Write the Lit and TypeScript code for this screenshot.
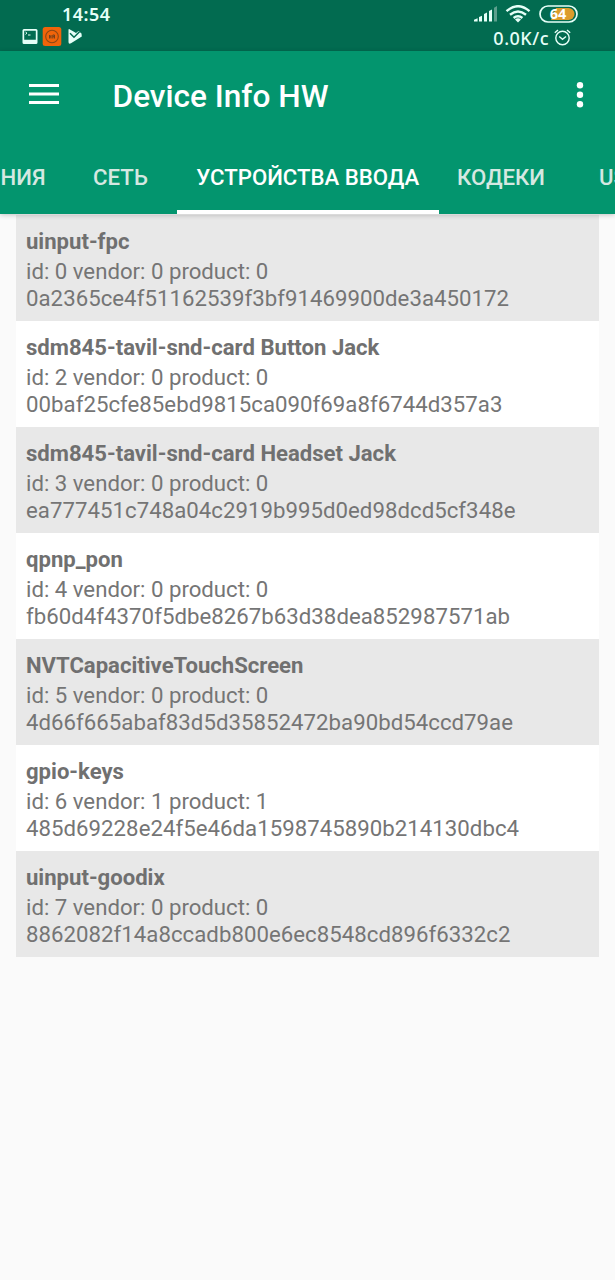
import { LitElement, html, css } from "lit";
import { customElement } from "lit/decorators.js";

interface Device {
  name: string;
  ids: string;
  hash: string;
}

const DEVICES: Device[] = [
  { name: "uinput-fpc", ids: "id: 0 vendor: 0 product: 0", hash: "0a2365ce4f51162539f3bf91469900de3a450172" },
  { name: "sdm845-tavil-snd-card Button Jack", ids: "id: 2 vendor: 0 product: 0", hash: "00baf25cfe85ebd9815ca090f69a8f6744d357a3" },
  { name: "sdm845-tavil-snd-card Headset Jack", ids: "id: 3 vendor: 0 product: 0", hash: "ea777451c748a04c2919b995d0ed98dcd5cf348e" },
  { name: "qpnp_pon", ids: "id: 4 vendor: 0 product: 0", hash: "fb60d4f4370f5dbe8267b63d38dea852987571ab" },
  { name: "NVTCapacitiveTouchScreen", ids: "id: 5 vendor: 0 product: 0", hash: "4d66f665abaf83d5d35852472ba90bd54ccd79ae" },
  { name: "gpio-keys", ids: "id: 6 vendor: 1 product: 1", hash: "485d69228e24f5e46da1598745890b214130dbc4" },
  { name: "uinput-goodix", ids: "id: 7 vendor: 0 product: 0", hash: "8862082f14a8ccadb800e6ec8548cd896f6332c2" },
];

@customElement("status-bar")
class StatusBar extends LitElement {
  static styles = css`
    :host {
      display: flex;
      justify-content: space-between;
      height: 51px;
      background: #026b50;
      color: #e6fff8;
      font: 500 18px/24px "Noto Sans", Roboto, sans-serif;
    }
    svg { display: block; }
    .left { padding: 2px 0 0 22px; }
    .clock { padding-left: 40px; font-weight: 600; font-size: 18px; letter-spacing: 0.5px; height: 25px; }
    .notes { display: flex; gap: 2px; }
    .right { padding-right: 37px; display: flex; flex-direction: column; align-items: flex-end; }
    .signals { display: flex; align-items: center; height: 27px; gap: 8px; }
    .speed { display: flex; align-items: center; gap: 5px; height: 21px; font-size: 18px; letter-spacing: 0.5px; padding-right: 7px; }
  `;
  render() {
    return html`
      <div class="left">
        <div class="clock">14:54</div>
        <div class="notes">
          <svg width="18" height="20" viewBox="0 0 18 20">
            <path fill="#e6fff8" fill-rule="evenodd" d="M2 2h12q1.500 0 1.500 1.500v12q0 1.500-1.500 1.500H2q-1.500 0-1.500-1.500v-12Q.5 2 2 2zM2.200 3.800v9h11.600v-9z"/>
            <path fill="none" stroke="#e6fff8" stroke-width="1" d="M3.500 5l1.500 1.200-1.500 1.200M6 8h2.500"/>
          </svg>
          <svg width="20" height="20" viewBox="0 0 20 20">
            <rect x=".7" y="0" width="18.600" height="19" rx="2.500" fill="#f0640a"/>
            <circle cx="10" cy="9.500" r="6.300" fill="none" stroke="#8a4816" stroke-width="1.100"/>
            <path stroke="#75401a" stroke-width="1" fill="none" d="M7.500 8v3.500M9 8v3.500M7.500 9.800H9M10.800 8v3.500M12.500 8v3.500M10.800 8h1.700M10.800 9.700h1.700"/>
          </svg>
          <svg width="18" height="20" viewBox="0 0 18 20">
            <path fill="#e6fff8" d="M5.500 2.200L9.500 4.500 12 6 14.500 4 17.500 6.500 17.800 9.500 7 16.300Q4.500 17.500 4.500 15V3Q4.500 1.800 5.500 2.200z"/>
            <path fill="none" stroke="#026b50" stroke-width="1.500" d="M6 6.300l4 4 5.500-5.500"/>
          </svg>
        </div>
      </div>
      <div class="right">
        <div class="signals">
          <svg width="23" height="18" viewBox="0 0 23 18">
            <path fill="#e6fff8" d="M0 16.500v-1.800l3.600-1.500v3.300zM5 16.500v-4.500l3-1.300v5.800zM10 16.500v-7.500l3-1.500v9zM15 16.500V6l3-1.600v12.100z"/>
            <path fill="#5c9f8d" d="M20 16.500V2.700L23 1.100v15.400z"/>
          </svg>
          <svg width="26" height="18" viewBox="0 0 26 18" fill="none" stroke="#e6fff8" stroke-width="2.400">
            <path d="M1.500 6.200Q13-3.800 24.500 6.200M5 9.700q8-6.500 16 0M8.600 13q4.400-3.600 8.800 0"/>
            <path fill="#e6fff8" stroke="none" d="M13 17.500l-3-3q3-2.300 6 0z"/>
          </svg>
          <svg width="39" height="18" viewBox="0 0 39 18">
            <rect x="1" y="1" width="37" height="16" rx="8" fill="none" stroke="#e6fff8" stroke-width="1.700"/>
            <path fill="#dc9c2b" d="M17 3h12.500a6 6 0 0 1 0 12H12z"/>
            <text x="19" y="14.300" text-anchor="middle" font-size="14.500" font-weight="700" fill="#fff">64</text>
          </svg>
        </div>
        <div class="speed">
          <span>0.0K/c</span>
          <svg width="17" height="17" viewBox="0 0 17 17" fill="none" stroke="#e6fff8" stroke-width="1.400">
            <circle cx="8.500" cy="9" r="6.700"/>
            <path d="M.8 3.800L4 1M13 1l3.200 2.800M5.200 7.500l3.300 2.800 3.500-2.800"/>
          </svg>
        </div>
      </div>
    `;
  }
}

@customElement("app-header")
class AppHeader extends LitElement {
  static styles = css`
    :host {
      display: block;
      height: 163px;
      background: #03956e;
      color: #fff;
      font-family: Roboto, sans-serif;
      box-shadow: 0 1px 5px rgba(0, 0, 0, 0.22);
      position: relative;
    }
    svg { display: block; }
    .bar { display: flex; align-items: center; height: 90px; padding: 0 30px 0 29px; }
    .menu { margin-top: -4px; }
    .more { margin-top: -3px; }
    h1 { flex: 1; margin: 2px 0 0 53.500px; font-size: 31.600px; line-height: 40px; font-weight: 500; white-space: nowrap; }
    .tabs { display: flex; height: 73px; overflow: hidden; font-size: 22.200px; font-weight: 500; line-height: 72px; white-space: nowrap; }
    .tab { flex: none; box-sizing: border-box; height: 73px; color: #d5e8e1; text-align: center; }
    .first { width: 64px; padding-right: 18.500px; display: flex; justify-content: flex-end; }
    .net { width: 113px; }
    .active { width: 261.500px; color: #fff; border-bottom: 4px solid #fff; }
    .codecs { width: 125px; }
    .usb { padding-left: 35.500px; }
  `;
  render() {
    return html`
      <div class="bar">
        <svg class="menu" width="30" height="22" viewBox="0 0 30 22">
          <path stroke="#fff" stroke-width="3" d="M0 2.500h30M0 11h30M0 19.500h30"/>
        </svg>
        <h1>Device Info HW</h1>
        <svg class="more" width="10" height="26" viewBox="0 0 10 26" fill="#fff">
          <circle cx="5" cy="3.300" r="3.200"/><circle cx="5" cy="12.800" r="3.200"/><circle cx="5" cy="22.300" r="3.200"/>
        </svg>
      </div>
      <div class="tabs">
        <div class="tab first">НИЯ</div>
        <div class="tab net">СЕТЬ</div>
        <div class="tab active">УСТРОЙСТВА ВВОДА</div>
        <div class="tab codecs">КОДЕКИ</div>
        <div class="tab usb">USB</div>
      </div>
    `;
  }
}

@customElement("device-list")
class DeviceList extends LitElement {
  static styles = css`
    :host {
      display: block;
      padding: 1.400px 16px 0;
      font: 400 22.200px/26px Roboto, sans-serif;
      color: #757575;
    }
    .row { height: 106px; box-sizing: border-box; padding: 13px 10px 0; background: #fff; white-space: nowrap; }
    .row:nth-child(odd) { background: #e8e8e8; }
    .name { font-weight: 700; font-size: 22.100px; margin-bottom: 4px; color: #707070; }
    .hash { letter-spacing: 0.04px; line-height: 28px; }
  `;
  render() {
    return DEVICES.map(
      (d) => html`<div class="row">
        <div class="name">${d.name}</div>
        <div>${d.ids}</div>
        <div class="hash">${d.hash}</div>
      </div>`
    );
  }
}

@customElement("app-root")
class AppRoot extends LitElement {
  static styles = css`
    :host { display: block; height: 1280px; overflow: hidden; background: #fafafa; }
  `;
  render() {
    return html`<status-bar></status-bar><app-header></app-header><device-list></device-list>`;
  }
}
